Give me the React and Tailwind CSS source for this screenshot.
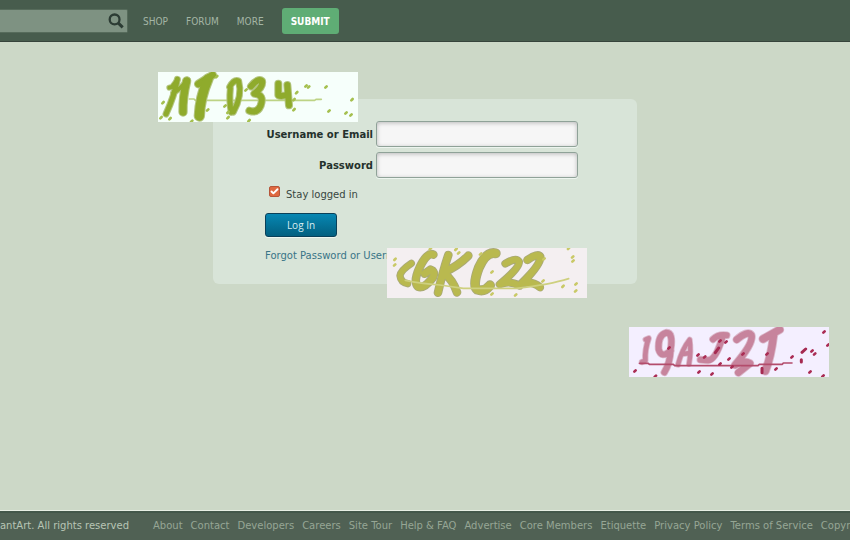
import React from "react";
import { Check } from "lucide-react";

const footerLinks = [
  "About", "Contact", "Developers", "Careers", "Site Tour", "Help & FAQ", "Advertise",
  "Core Members", "Etiquette", "Privacy Policy", "Terms of Service", "Copyright Policy",
];

function Specks({ points, color }) {
  return points.map(([x, y]) => (
    <path key={`${x}-${y}`} d={`M${x - 2} ${y + 2}l4 -4`} stroke={color} strokeWidth="8" />
  ));
}

function GreenCaptcha() {
  return (
    <svg role="img" aria-label="Green brush captcha" viewBox="24 21 600 150" className="absolute -left-[55px] -top-[27px] h-[50px] w-[200px] bg-[#f6fffb]" fill="none" strokeLinecap="round" strokeLinejoin="round">
      <path d="M118 102h14l4 4h358l4-3h16" stroke="#bdd385" strokeWidth="5" />
      {[["#b3c580", 6], ["#8fab2c", 0]].map(([color, extra]) => (
        <g key={color} stroke={color}>
          <path d="M82 43Q74 90 48 147" strokeWidth={15 + extra} />
          <path d="M82 45L66 66L58 68M70 84Q92 72 113 44" strokeWidth={12 + extra} />
          <path d="M110 48Q98 96 99 141" strokeWidth={22 + extra} />
          <path d="M145 57L188 30" strokeWidth={20 + extra} />
          <path d="M174 42Q150 98 148 153" strokeWidth={28 + extra} />
          <path d="M241 70Q237 111 244 142M239 66Q252 42 266 48Q278 91 250 141" strokeWidth={15 + extra} />
          <path d="M303 64Q325 38 336 48Q340 66 313 86Q344 88 332 122Q322 146 298 137" strokeWidth={18 + extra} />
          <path d="M385 56L385 91Q396 97 414 87M412 60L417 121" strokeWidth={18 + extra} />
        </g>
      ))}
      <Specks color="#a5c04f" points={[[39,113],[33,158],[60,161],[125,169],[173,135],[200,35],[225,123],[234,142],[234,158],[288,75],[297,167],[440,83],[432,104],[432,134],[468,63],[476,66],[528,66],[606,104],[537,138],[588,144],[603,150]]} />
    </svg>
  );
}

function OliveCaptcha() {
  return (
    <svg role="img" aria-label="Olive brush captcha" viewBox="21 24 600 150" className="absolute left-[174px] top-[149px] h-[50px] w-[200px] bg-[#f4eff1]" fill="none" strokeLinecap="round" strokeLinejoin="round">
      {[["#a9a978", 5], ["#b9b94f", 0]].map(([color, extra]) => (
        <g key={color} stroke={color}>
          <path d="M94 70Q62 91 60 107Q62 127 83 131" strokeWidth={17 + extra} />
          <path d="M160 44Q142 35 119 82Q99 125 114 140Q133 147 159 112Q167 94 151 89L134 101" strokeWidth={21 + extra} />
          <path d="M205 45Q188 96 174 158M265 47Q236 77 190 98Q219 119 231 157" strokeWidth={21 + extra} />
          <path d="M347 40Q319 34 297 82Q276 137 292 149Q313 157 330 136" strokeWidth={25 + extra} />
          <path d="M376 71Q408 51 417 65Q420 83 359 133Q389 120 419 137" strokeWidth={19 + extra} />
          <path d="M442 60Q474 38 481 50Q483 74 425 130Q459 122 480 142" strokeWidth={20 + extra} />
        </g>
      ))}
      <path d="M76 121Q120 130 180 135L250 145H410Q510 134 566 116" stroke="#ced07f" strokeWidth="5" />
      <Specks color="#c9c967" points={[[45,58],[44,75],[151,26],[228,28],[236,39],[302,42],[336,96],[336,162],[407,165],[489,123],[492,57],[566,25],[578,51],[579,63],[549,139],[588,132],[587,153]]} />
    </svg>
  );
}

function RoseCaptcha() {
  return (
    <svg role="img" aria-label="Rose brush captcha" viewBox="21 21 600 150" className="absolute left-[416px] top-[228px] h-[50px] w-[200px] bg-[#f4efff]" fill="none" strokeLinecap="round" strokeLinejoin="round">
      {[["#dbb9cb", 5], ["#c7849d", 0]].map(([color, extra]) => (
        <g key={color} stroke={color}>
          <path d="M71 59L80 55Q68 89 70 122L60 126" strokeWidth={14 + extra} />
          <path d="M146 92Q118 117 110 88Q107 45 133 38Q154 37 146 88Q144 131 127 157" strokeWidth={18 + extra} />
          <path d="M168 134Q180 88 203 59Q208 94 201 132M181 102L205 99" strokeWidth={13 + extra} />
          <path d="M273 58Q289 42 314 46M302 49Q282 120 258 121L235 119" strokeWidth={18 + extra} />
          <path d="M344 59Q377 31 388 45Q396 68 339 135Q367 119 384 130L349 158" strokeWidth={20 + extra} />
          <path d="M423 57L473 29M455 44Q447 111 430 153" strokeWidth={22 + extra} />
        </g>
      ))}
      <path d="M52 130h27l3 3h72l4 4h250l4-4h69l3-4h26" stroke="#b34c6c" strokeWidth="5" />
      <path d="M280 98l10-14M540 97l11-10M420 145v13M538 119v7" stroke="#a52a51" strokeWidth="9" />
      <Specks color="#aa2c54" points={[[39,153],[100,169],[141,84],[228,105],[248,111],[294,63],[312,66],[321,117],[294,132],[231,156],[270,162],[330,141],[363,102],[435,102],[462,147],[510,111],[570,93],[578,102],[564,156],[606,36],[618,75],[603,168]]} />
    </svg>
  );
}

const fieldClass = "h-[26px] w-full rounded-[3px] border border-[#8fa298] bg-[#f6f6f6] px-2 text-xs shadow-[inset_0_1px_4px_#b9b9b9,0_1px_0_#edf5ef] outline-none";

export default function App() {
  return (
    <div className="flex min-h-screen flex-col overflow-hidden bg-[#ccd8c7] font-['DejaVu_Sans',sans-serif] text-[10px] text-[#374640]">
      <header className="flex h-[42px] shrink-0 items-center border-b border-[#36443b] bg-[#475c4d] pt-px">
        <form className="flex h-6 w-32 items-center justify-end rounded-r-[2px] border border-l-0 border-[#566b5b] bg-[#7e9282]" onSubmit={(e) => e.preventDefault()}>
          <input aria-label="Search" type="search" className="h-full min-w-0 flex-1 bg-transparent px-2 outline-none" />
          <button aria-label="Search deviations" className="pr-[3px]">
            <svg viewBox="0 0 16 16" className="h-4 w-4" fill="none" stroke="#2c3c34">
              <circle cx="6.6" cy="6.4" r="4.9" strokeWidth="2.3" />
              <path d="M10.3 10.2l4.4 4.2" strokeWidth="3" />
            </svg>
          </button>
        </form>
        <nav className="ml-[15px] flex items-center gap-[18px] font-['DejaVu_Sans_Condensed','DejaVu_Sans',sans-serif] text-[#a4b5a5]">
          <a href="#shop">SHOP</a>
          <a href="#forum">FORUM</a>
          <a href="#more">MORE</a>
          <button className="h-[26px] rounded-[3px] bg-[#5fad75] px-[9px] font-bold text-white">SUBMIT</button>
        </nav>
      </header>

      <main className="flex-1 px-4 pt-[57px]">
        <section className="relative mx-auto h-fit w-[424px] max-w-full rounded-md bg-[#d8e4d8] pb-5 pl-[52px] pt-[22px]">
          <form className="flex flex-col items-start" onSubmit={(e) => e.preventDefault()}>
            <div className="grid grid-cols-[108px_202px] items-center gap-x-[3px] gap-y-[5px] text-right font-bold text-[#24312c]">
              <label htmlFor="username" className="whitespace-nowrap">Username or Email</label>
              <input id="username" type="text" className={fieldClass} />
              <label htmlFor="password">Password</label>
              <input id="password" type="password" className={fieldClass} />
            </div>
            <label className="ml-1 mt-2 flex items-start gap-[6px]">
              <span className="grid h-[11px] w-[11px] place-items-center">
                <input type="checkbox" defaultChecked className="col-start-1 row-start-1 h-[11px] w-[11px] appearance-none rounded-[2px] border border-[#b5563a] bg-[#df6940]" />
                <Check className="pointer-events-none col-start-1 row-start-1 h-[9px] w-[9px] text-white" strokeWidth={5} />
              </span>
              <span className="pt-px leading-4">Stay logged in</span>
            </label>
            <button className="mt-[10px] h-6 w-[72px] rounded-[3px] border border-[#0a4059] bg-linear-to-b from-[#0787b3] to-[#036080] font-['Open_Sans',sans-serif] text-[#d9edf2] shadow-[0_1px_0_#eff7f0]">Log In</button>
            <a href="#forgot" className="mt-[11px] leading-4 text-[#397487]">Forgot Password or Username?</a>
          </form>
          <GreenCaptcha />
          <OliveCaptcha />
          <RoseCaptcha />
        </section>
      </main>

      <footer className="flex h-[30px] shrink-0 items-center overflow-hidden whitespace-nowrap border-t border-[#e7efe4] bg-[#506154] shadow-[inset_0_2px_0_#43574a]">
        <p className="flex w-[129px] shrink-0 justify-end overflow-hidden text-[#b7c5b5]">deviantArt. All rights reserved</p>
        <nav className="ml-6 flex gap-2 text-[#96a695]">
          {footerLinks.map((item) => <a key={item} href="#footer">{item}</a>)}
        </nav>
      </footer>
    </div>
  );
}
